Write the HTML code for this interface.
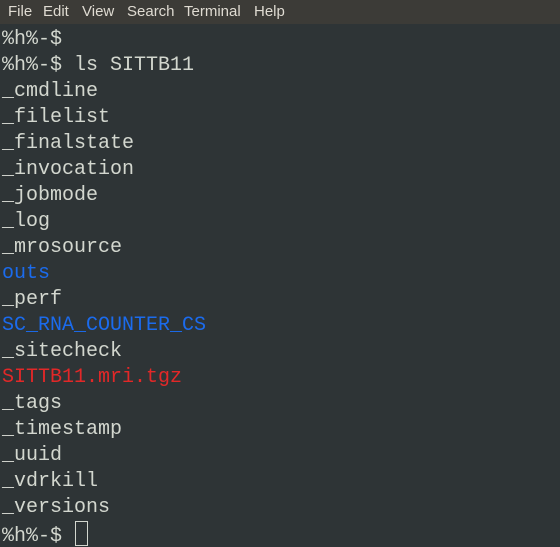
<!DOCTYPE html>
<html><head><style>
html,body{margin:0;padding:0;width:560px;height:547px;overflow:hidden;background:#2e3436;}
.menu{position:relative;height:24px;background:#3c3b37;color:#dfdbd2;font:15px "Liberation Sans",sans-serif;line-height:24px}
.menu span{position:absolute;top:0}
.term{font:20px/26px "Liberation Mono",monospace;color:#d3d7cf;padding-left:2px;padding-top:3px;white-space:pre}
.b{color:#1b6bed}.r{color:#e22828}
.cur{display:inline-block;width:11px;height:23px;border:1px solid #d3d7cf;vertical-align:-5px;margin-left:1px}
</style></head><body>
<div class="menu"><span style="left:8px">File</span><span style="left:43px">Edit</span><span style="left:82px">View</span><span style="left:127px">Search</span><span style="left:184px">Terminal</span><span style="left:254px">Help</span></div>
<div class="term">%h%-$
%h%-$ ls SITTB11
_cmdline
_filelist
_finalstate
_invocation
_jobmode
_log
_mrosource
<span class="b">outs</span>
_perf
<span class="b">SC_RNA_COUNTER_CS</span>
_sitecheck
<span class="r">SITTB11.mri.tgz</span>
_tags
_timestamp
_uuid
_vdrkill
_versions
%h%-$ <span class="cur"></span></div>
</body></html>
